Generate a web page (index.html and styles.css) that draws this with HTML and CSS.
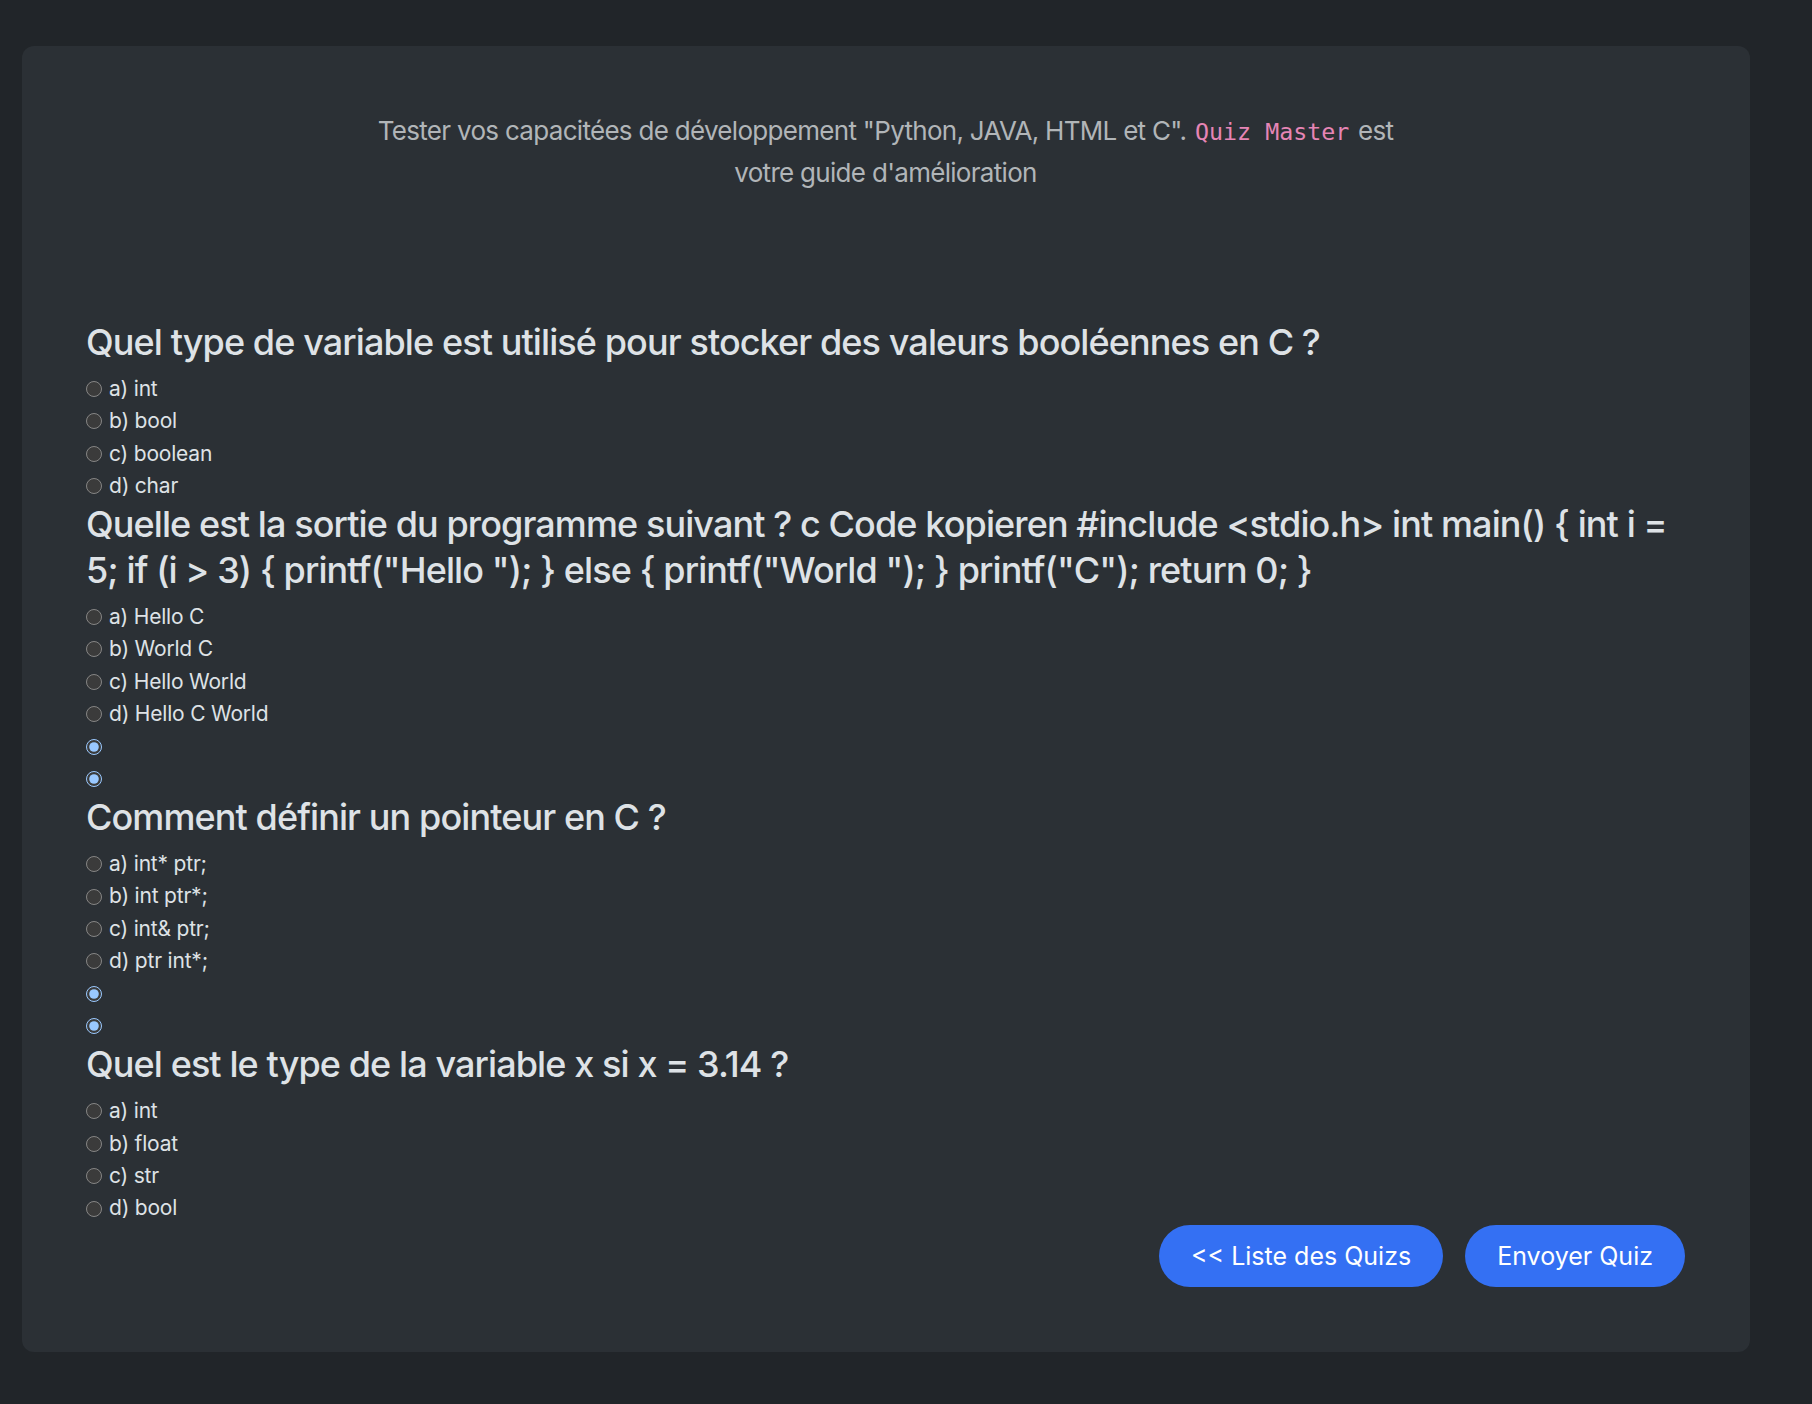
FILE: index.html
```html
<!DOCTYPE html>
<html lang="fr">
<head>
<meta charset="utf-8">
<title>Quiz Master</title>
<link rel="stylesheet" href="styles.css">
</head>
<body>
<main class="card">
  <p class="lead">Tester vos capacitées de développement "Python, JAVA, HTML et C". <code>Quiz Master</code> est votre guide d'amélioration</p>

  <form class="quiz">
    <section class="question">
      <h3 class="q-title">Quel type de variable est utilisé pour stocker des valeurs booléennes en C ?</h3>
      <div class="opt"><input type="radio" name="q1" id="q1a"><label for="q1a">a) int</label></div>
      <div class="opt"><input type="radio" name="q1" id="q1b"><label for="q1b">b) bool</label></div>
      <div class="opt"><input type="radio" name="q1" id="q1c"><label for="q1c">c) boolean</label></div>
      <div class="opt"><input type="radio" name="q1" id="q1d"><label for="q1d">d) char</label></div>
    </section>

    <section class="question">
      <h3 class="q-title">Quelle est la sortie du programme suivant ? c Code kopieren #include &lt;stdio.h&gt; int main() { int i = 5; if (i &gt; 3) { printf("Hello "); } else { printf("World "); } printf("C"); return 0; }</h3>
      <div class="opt"><input type="radio" name="q2" id="q2a"><label for="q2a">a) Hello C</label></div>
      <div class="opt"><input type="radio" name="q2" id="q2b"><label for="q2b">b) World C</label></div>
      <div class="opt"><input type="radio" name="q2" id="q2c"><label for="q2c">c) Hello World</label></div>
      <div class="opt"><input type="radio" name="q2" id="q2d"><label for="q2d">d) Hello C World</label></div>
      <div class="opt"><input type="radio" name="q2x" checked></div>
      <div class="opt"><input type="radio" name="q2y" checked></div>
    </section>

    <section class="question">
      <h3 class="q-title">Comment définir un pointeur en C ?</h3>
      <div class="opt"><input type="radio" name="q3" id="q3a"><label for="q3a">a) int* ptr;</label></div>
      <div class="opt"><input type="radio" name="q3" id="q3b"><label for="q3b">b) int ptr*;</label></div>
      <div class="opt"><input type="radio" name="q3" id="q3c"><label for="q3c">c) int&amp; ptr;</label></div>
      <div class="opt"><input type="radio" name="q3" id="q3d"><label for="q3d">d) ptr int*;</label></div>
      <div class="opt"><input type="radio" name="q3x" checked></div>
      <div class="opt"><input type="radio" name="q3y" checked></div>
    </section>

    <section class="question">
      <h3 class="q-title">Quel est le type de la variable x si x = 3.14 ?</h3>
      <div class="opt"><input type="radio" name="q4" id="q4a"><label for="q4a">a) int</label></div>
      <div class="opt"><input type="radio" name="q4" id="q4b"><label for="q4b">b) float</label></div>
      <div class="opt"><input type="radio" name="q4" id="q4c"><label for="q4c">c) str</label></div>
      <div class="opt"><input type="radio" name="q4" id="q4d"><label for="q4d">d) bool</label></div>
    </section>

    <div class="actions">
      <a class="btn" href="#">&lt;&lt; Liste des Quizs</a>
      <button class="btn" type="button">Envoyer Quiz</button>
    </div>
  </form>
</main>
</body>
</html>
```

FILE: styles.css
```css
html {
  color-scheme: dark;
}

body {
  margin: 0;
  background: #212529;
  color: #dee2e6;
  font-family: Inter, "Noto Sans", "Liberation Sans", sans-serif;
  min-height: 1404px;
}

.card {
  box-sizing: border-box;
  width: 1728px;
  margin: 46px 0 0 22px;
  padding: 65px 65px 65px 64px;
  background: #2b3035;
  border-radius: 12px;
}

.lead {
  max-width: 1040px;
  margin: 0 auto 127px;
  text-align: center;
  font-size: 26px;
  line-height: 40.5px;
  letter-spacing: -0.7px;
  color: #b1b5b8;
}

.lead code {
  margin: 0 2px;
  font-family: "DejaVu Sans Mono", "Liberation Mono", monospace;
  font-size: 23.3px;
  letter-spacing: 0;
  color: #e685b5;
}

.q-title {
  margin: 0 0 7.5px;
  font-size: 36px;
  font-weight: 500;
  line-height: 45.4px;
  letter-spacing: -0.9px;
  color: #dee2e6;
}

.opt {
  display: flex;
  align-items: center;
  height: 32.4px;
  font-size: 21px;
  letter-spacing: -0.2px;
}

.opt input {
  width: 16px;
  height: 16px;
  margin: 0 7px 0 0;
  flex: none;
}

.opt label {
  line-height: 32.4px;
}

.actions {
  display: flex;
  justify-content: flex-end;
  gap: 22px;
}

.btn {
  display: inline-block;
  padding: 11px 32px;
  border: none;
  border-radius: 999px;
  background: #3470f3;
  color: #ffffff;
  font-family: inherit;
  font-size: 25px;
  line-height: 40.5px;
  text-decoration: none;
  cursor: pointer;
}
```
